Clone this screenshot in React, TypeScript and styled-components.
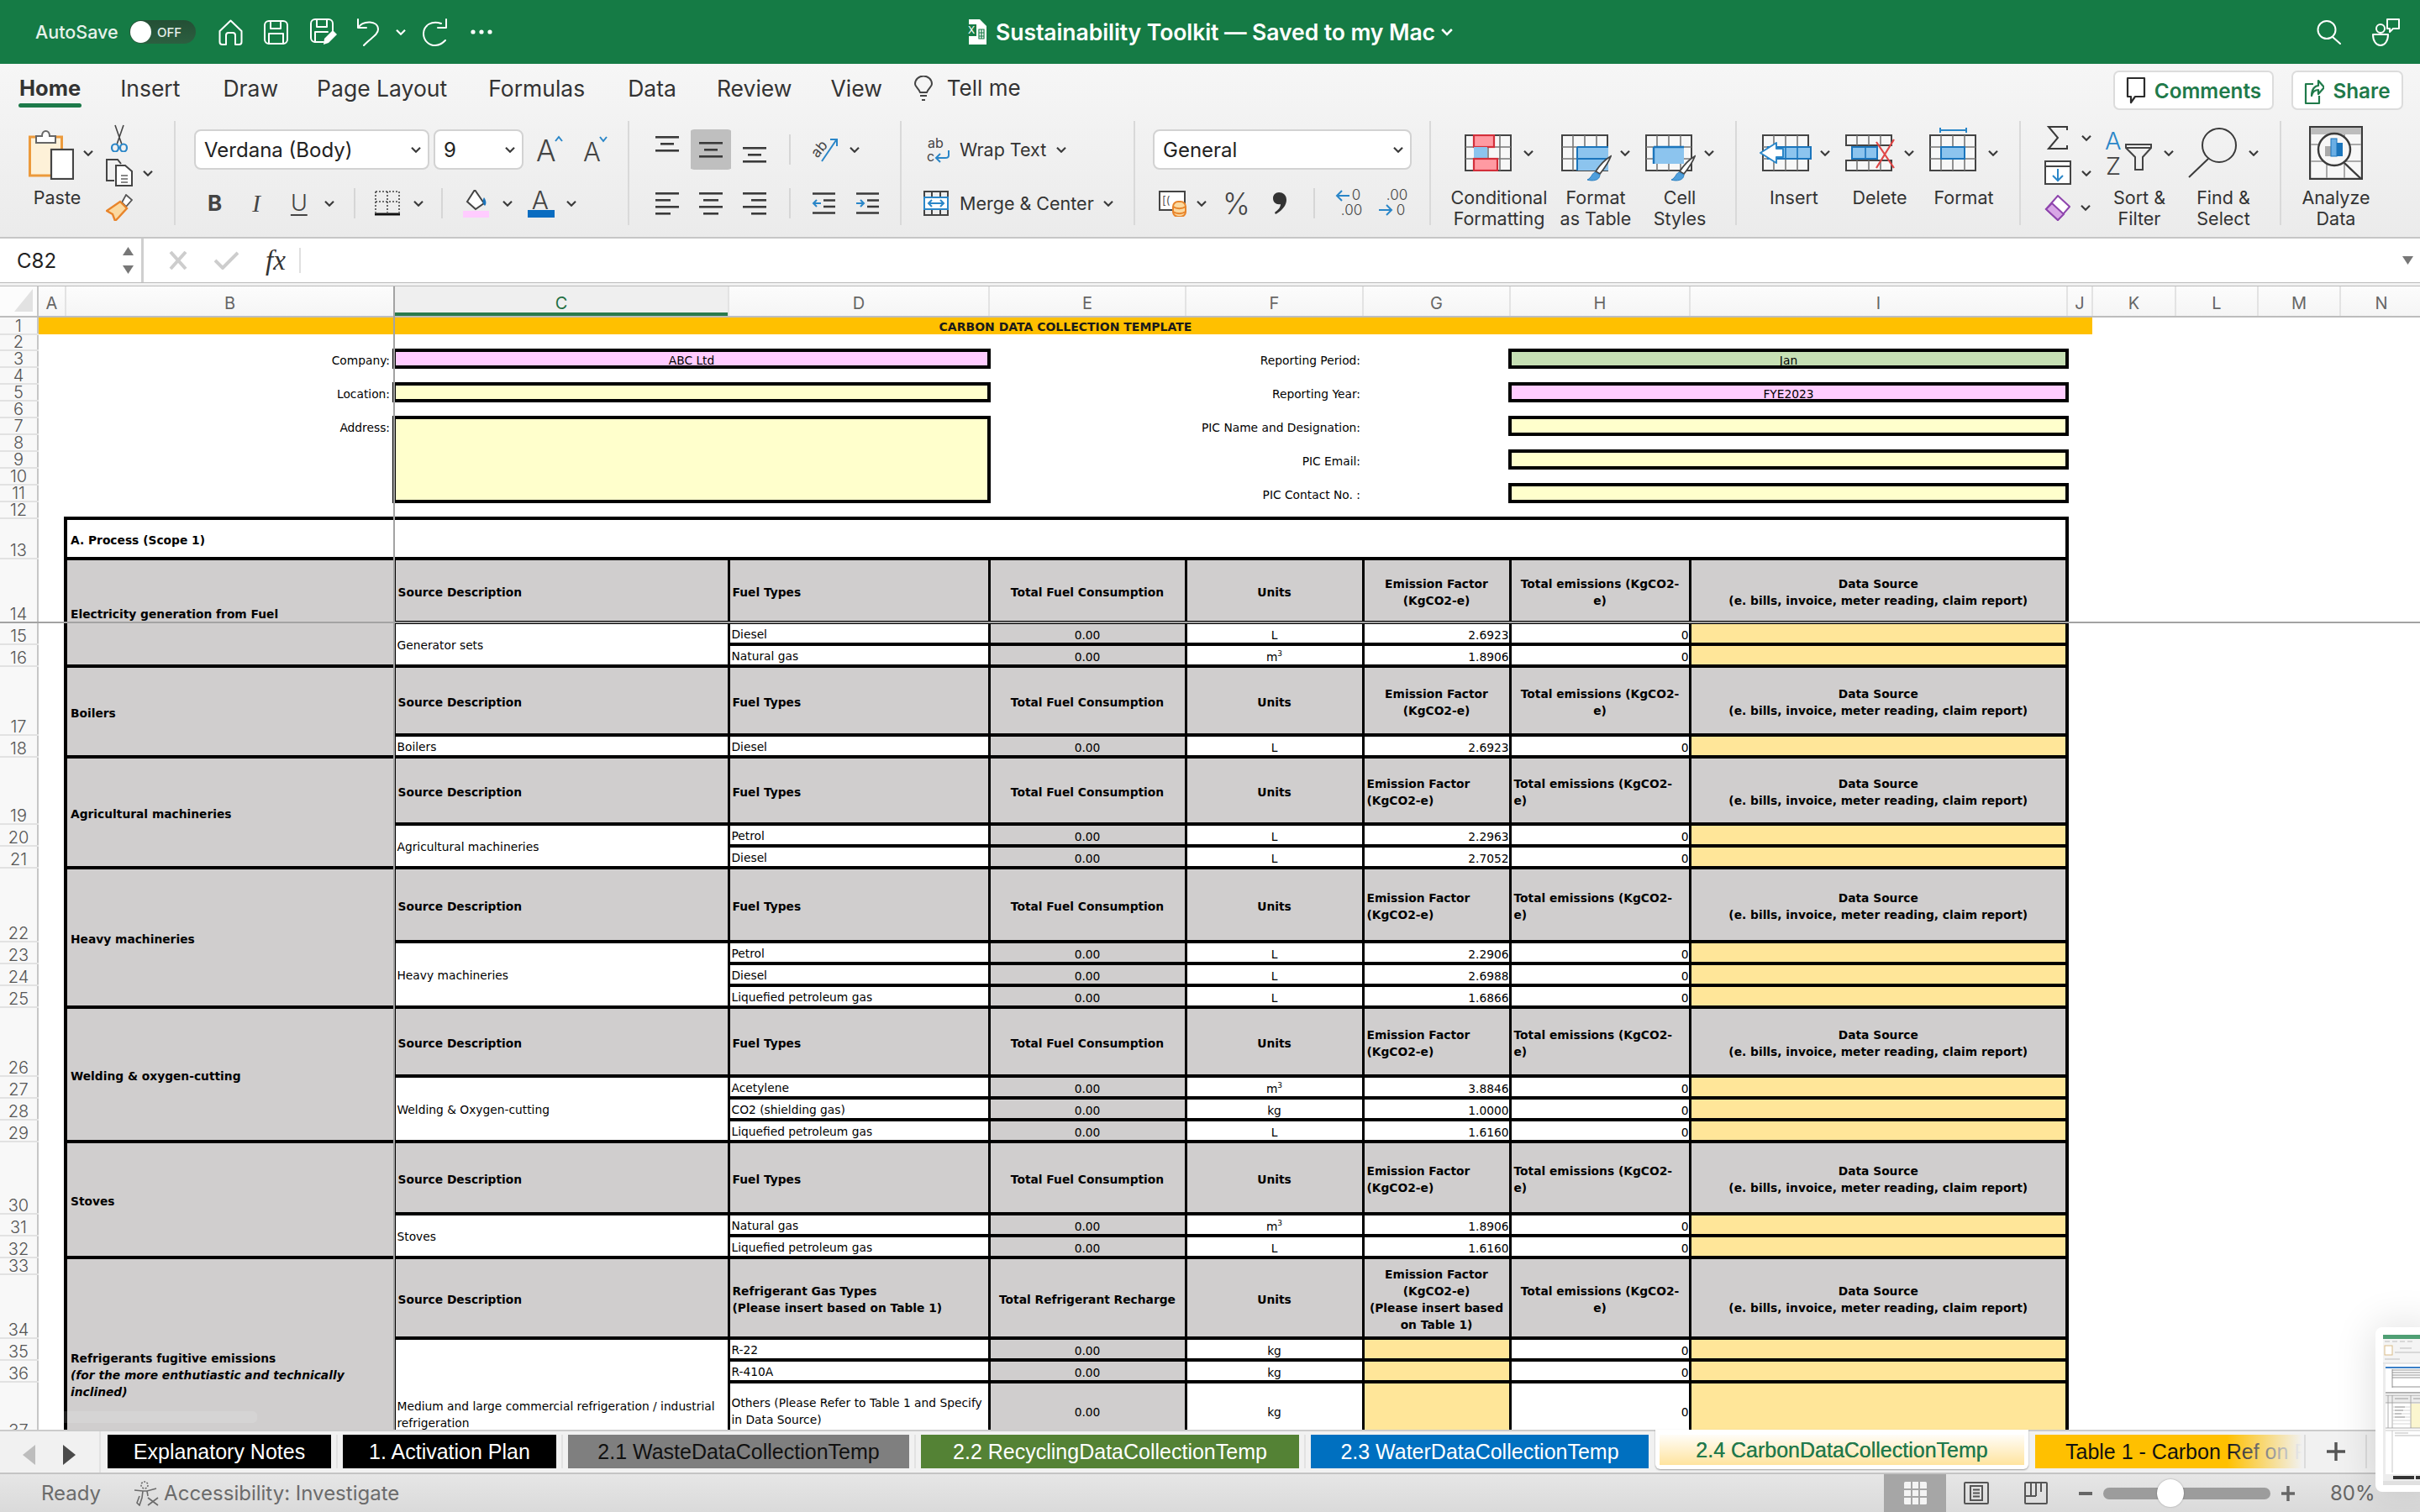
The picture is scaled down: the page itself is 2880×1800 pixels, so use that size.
import React from 'react';
import styled, { createGlobalStyle, css } from 'styled-components';

const Global = createGlobalStyle`
  html, body { margin: 0; padding: 0; background: #fff; }
  * { box-sizing: border-box; }
`;

const UI = `Inter, "Liberation Sans", sans-serif`;
const SHEET = `"DejaVu Sans", Verdana, sans-serif`;

const Window = styled.div`
  position: relative;
  width: 2880px;
  height: 1800px;
  overflow: hidden;
  display: flex;
  flex-direction: column;
  font-family: ${UI};
  color: #333;
`;

/* title bar */
const TitleBar = styled.div`
  height: 76px;
  flex: none;
  background: #157b45;
  display: flex;
  align-items: center;
  position: relative;
  padding-left: 42px;
  color: #fff;
`;
const AutoSave = styled.span`
  font-size: 21.5px;
  color: #e6f1ea;
  font-weight: 500;
  width: 112px;
`;
const Toggle = styled.div`
  width: 79px;
  height: 28px;
  border-radius: 14px;
  background: linear-gradient(#244f35, #2c5f40);
  display: flex;
  align-items: center;
  padding-left: 1px;
  gap: 7px;
  margin-right: 27px;
`;
const Knob = styled.span`
  width: 25px;
  height: 26px;
  border-radius: 50%;
  background: #fff;
`;
const ToggleText = styled.span`
  font-size: 15px;
  font-weight: 500;
  color: #e4efe8;
`;
const QuickIcon = styled.span<{ $ml?: number }>`
  display: inline-flex;
  margin-left: ${(p) => p.$ml ?? 0}px;
`;
const TitleCenter = styled.div`
  position: absolute;
  left: 1150px;
  top: 0;
  height: 76px;
  display: flex;
  align-items: center;
`;
const TitleText = styled.span`
  font-size: 26.6px;
  font-weight: 600;
  margin-left: 11px;
  margin-right: 7px;
  letter-spacing: -0.1px;
`;
const TitleRight = styled.div`
  margin-left: auto;
  padding-right: 24px;
  display: flex;
  align-items: center;
  gap: 37px;
`;

/* menu row */
const Shell = styled.div`
  flex: none;
  height: 208px;
  background: linear-gradient(#f6f6f6, #ebebeb);
  border-bottom: 2px solid #c6c6c6;
`;
const MenuRow = styled.div`
  height: 68px;
  display: flex;
  align-items: flex-start;
  padding-left: 23px;
  position: relative;
`;
const MenuTab = styled.div<{ $active?: boolean; $ml: number }>`
  position: relative;
  margin-left: ${(p) => p.$ml}px;
  margin-top: 12px;
  font-size: ${(p) => (p.$active ? 25.5 : 26.5)}px;
  line-height: 34px;
  color: #333;
  font-weight: ${(p) => (p.$active ? 700 : 400)};
  ${(p) =>
    p.$active &&
    css`
      &::after {
        content: '';
        position: absolute;
        left: -1px;
        right: -1px;
        bottom: -6px;
        height: 5px;
        border-radius: 3px;
        background: #1d7a4a;
      }
    `}
`;
const TellMe = styled.div`
  display: flex;
  align-items: center;
  gap: 17px;
  margin-left: 38px;
  margin-top: 12px;
  font-size: 26px;
  line-height: 34px;
`;
const MenuButtons = styled.div`
  position: absolute;
  right: 20px;
  top: 8px;
  display: flex;
  gap: 21px;
`;
const PillButton = styled.div<{ $w: number }>`
  width: ${(p) => p.$w}px;
  height: 47px;
  background: #fff;
  border: 2px solid #dcdcdc;
  border-radius: 7px;
  display: flex;
  align-items: center;
  justify-content: center;
  gap: 10px;
  color: #1f7a4a;
  font-size: 24.3px;
  font-weight: 600;
`;

/* ribbon */
const Ribbon = styled.div`
  display: flex;
  height: 124px;
`;
const Group = styled.div<{ $w: number; $pl?: number; $last?: boolean }>`
  flex: none;
  width: ${(p) => p.$w}px;
  padding-left: ${(p) => p.$pl ?? 0}px;
  border-right: ${(p) => (p.$last ? 'none' : '2px solid #d9d9d9')};
`;
const FlexGroup = styled(Group)`
  display: flex;
`;
const Rows = styled.div`
  display: flex;
  flex-direction: column;
  padding-top: 10px;
  gap: 20px;
`;
const ToolRow = styled.div<{ $h?: number }>`
  display: flex;
  align-items: center;
  height: ${(p) => p.$h ?? 40}px;
`;
const Tool = styled.span<{ $ml?: number; $mt?: number; $mb?: number }>`
  display: inline-flex;
  flex: none;
  align-items: center;
  justify-content: center;
  margin-left: ${(p) => p.$ml ?? 0}px;
  margin-top: ${(p) => p.$mt ?? 0}px;
  margin-bottom: ${(p) => p.$mb ?? 0}px;
`;
const ThinSep = styled.span<{ $ml: number }>`
  width: 2px;
  height: 36px;
  flex: none;
  background: #d6d6d6;
  margin-left: ${(p) => p.$ml}px;
`;
const Select = styled.div<{ $w: number; $ml?: number }>`
  width: ${(p) => p.$w}px;
  margin-left: ${(p) => p.$ml ?? 0}px;
  height: 48px;
  flex: none;
  background: #fff;
  border: 2px solid #d2d2d2;
  border-radius: 8px;
  display: flex;
  align-items: center;
  justify-content: space-between;
  padding: 0 8px 0 10px;
  font-size: 24px;
  color: #222;
`;
const FormatLetter = styled.span<{ $ml: number; $kind: 'b' | 'i' | 'u' }>`
  margin-left: ${(p) => p.$ml}px;
  font-size: 27px;
  line-height: 34px;
  color: #444;
  ${(p) => p.$kind === 'b' && 'font-weight: 700; font-size: 26px;'}
  ${(p) => p.$kind === 'i' && 'font-style: italic; font-family: "Liberation Serif", serif; font-size: 29px;'}
  ${(p) => p.$kind === 'u' && 'text-decoration: underline; text-underline-offset: 4px; font-weight: 300;'}
`;
const AlignCell = styled.span<{ $on?: boolean; $pos?: 'top' | 'bottom' }>`
  width: 52px;
  height: 48px;
  flex: none;
  display: flex;
  align-items: ${(p) => (p.$pos === 'top' ? 'flex-start' : p.$pos === 'bottom' ? 'flex-end' : 'center')};
  padding: ${(p) => (p.$pos ? '8px 0' : '0')};
  justify-content: center;
  ${(p) => p.$on && 'background: linear-gradient(90deg, transparent 2px, #bfbfbf 2px, #bfbfbf 50px, transparent 50px); border-radius: 6px;'}
`;
const WrapLabel = styled.span`
  margin-left: 10px;
  font-size: 21.5px;
  color: #333;
  white-space: nowrap;
`;
const BigSymbol = styled.span<{ $ml: number; $size: number }>`
  margin-left: ${(p) => p.$ml}px;
  font-size: ${(p) => p.$size}px;
  line-height: 40px;
  font-weight: 300;
  color: #444;
`;
const BigBtn = styled.div<{ $w: number }>`
  width: ${(p) => p.$w}px;
  flex: none;
  display: flex;
  flex-direction: column;
  align-items: center;
`;
const BigIconRow = styled.div<{ $gap?: number }>`
  height: 76px;
  flex: none;
  display: flex;
  align-items: center;
  gap: ${(p) => p.$gap ?? 14}px;
`;
const BigLabel = styled.div`
  flex: none;
  font-size: 21.5px;
  line-height: 25px;
  text-align: center;
  white-space: pre-line;
  color: #333;
  margin-top: 3px;
`;
const PasteLabel = styled(BigLabel)`
  padding-right: 8px;
`;
const ToolColumn = styled.div<{ $w: number }>`
  width: ${(p) => p.$w}px;
  flex: none;
  display: flex;
  flex-direction: column;
`;
const ColumnItem = styled.div`
  height: 43.5px;
  display: flex;
  align-items: center;
  gap: 12px;
`;

/* icons built from a letter and a small drawing */
const IconBox = styled.span<{ $w: number; $h: number }>`
  position: relative;
  display: inline-block;
  flex: none;
  width: ${(p) => p.$w}px;
  height: ${(p) => p.$h}px;
  & > svg {
    position: absolute;
    left: 0;
    top: 0;
  }
`;
const Glyph = styled.span<{ $x: number; $y: number; $size: number; $c?: string; $rot?: number; $fw?: number }>`
  position: absolute;
  left: ${(p) => p.$x}px;
  top: ${(p) => p.$y}px;
  font-size: ${(p) => p.$size}px;
  line-height: 1;
  font-weight: ${(p) => p.$fw ?? 300};
  color: ${(p) => p.$c ?? '#444'};
  white-space: nowrap;
  ${(p) => p.$rot && `transform: rotate(${p.$rot}deg);`}
`;

/* formula bar */
const FormulaBar = styled.div`
  height: 52px;
  flex: none;
  background: #fff;
  display: flex;
  align-items: center;
  position: relative;
`;
const NameBox = styled.div`
  width: 171px;
  height: 52px;
  border-right: 3px solid #cfcfcf;
  display: flex;
  align-items: center;
  justify-content: space-between;
  padding: 0 9px 0 20px;
  font-size: 24px;
  color: #222;
`;
const Spinner = styled.div`
  display: flex;
  flex-direction: column;
  gap: 12px;
`;
const FxText = styled.span`
  font-family: 'Liberation Serif', serif;
  font-style: italic;
  font-size: 33px;
  color: #333;
  margin-left: 32px;
  width: 40px;
`;
const FormulaSep = styled.span`
  width: 2px;
  height: 30px;
  background: #e0e0e0;
`;
const FormulaDrop = styled.span`
  position: absolute;
  right: 8px;
  top: 21px;
  display: flex;
`;
const FormulaGap = styled.div`
  height: 5px;
  flex: none;
  background: #f2f2f2;
  border-top: 1px solid #bcbcbc;
  border-bottom: 1px solid #bcbcbc;
`;

/* sheet */
const Viewport = styled.div`
  position: relative;
  flex: 1;
  min-height: 0;
  overflow: hidden;
  background: #fff;
`;
const SheetTable = styled.table`
  border-collapse: collapse;
  table-layout: fixed;
  width: 2883px;
  font-family: ${SHEET};
  font-size: 13.8px;
  line-height: 16px;
  color: #000;
`;
const Col = styled.col<{ $w: number }>`
  width: ${(p) => p.$w}px;
`;
const Row = styled.tr<{ $h: number }>`
  height: ${(p) => p.$h}px;
`;
const ColHead = styled.th<{ $selected?: boolean }>`
  padding: 4px 0 0;
  font-family: ${UI};
  font-weight: 400;
  font-size: 20px;
  line-height: 20px;
  color: ${(p) => (p.$selected ? '#1f6f43' : '#666')};
  background: ${(p) => (p.$selected ? '#efefef' : 'linear-gradient(#fcfcfc, #f5f5f5)')};
  border-right: 2px solid #e3e3e3;
  border-bottom: 2px solid #bdbdbd;
  ${(p) => p.$selected && 'box-shadow: inset 0 -4px 0 #2a7a4c;'}
`;
const Corner = styled.th`
  padding: 0 5px 0 0;
  background: #fcfcfc;
  border-right: 2px solid #c6c6c6;
  border-bottom: 2px solid #bdbdbd;
  text-align: right;
  vertical-align: middle;
`;
const RowHead = styled.td`
  padding: 0;
  font-family: ${UI};
  font-size: 20px;
  font-weight: 300;
  line-height: 16px;
  text-align: center;
  vertical-align: bottom;
  padding-bottom: 1px;
  color: #555;
  background: #f8f8f8;
  border-right: 2px solid #c6c6c6;
  border-bottom: 2px solid #e2e2e2;
`;
const Blank = styled.td`
  padding: 0;
`;
const Banner = styled.td`
  padding: 2px 0 0;
  background: #ffc000;
  text-align: center;
  font-weight: 700;
  font-size: 14px;
  color: #1a1a1a;
`;
const FieldLabel = styled.td`
  padding: 4px 3px 0 0;
  text-align: right;
  white-space: nowrap;
`;
const FieldBox = styled.td<{ $bg: string }>`
  padding: 4px 0 0;
  line-height: 12px;
  text-align: center;
  background: ${(p) => p.$bg};
  border: 4px solid #000;
`;
const SectionTitle = styled.td`
  padding: 4px 0 0 4px;
  font-weight: 700;
  background: #fff;
  border: 4px solid #000;
`;

type CellKind = 'title' | 'headLeft' | 'headCenter' | 'plain' | 'fill' | 'center' | 'number' | 'input';

const kindStyles: Record<CellKind, ReturnType<typeof css>> = {
  title: css`
    background: #d0cece;
    font-weight: 700;
    line-height: 20px;
    padding: 4px 0 0 4px;
    border-left-width: 4px;
  `,
  headLeft: css`
    background: #d0cece;
    font-weight: 700;
    line-height: 20px;
    padding: 4px 0 0 3px;
  `,
  headCenter: css`
    background: #d0cece;
    font-weight: 700;
    line-height: 20px;
    padding-top: 4px;
    text-align: center;
  `,
  plain: css`
    background: #fff;
    line-height: 20px;
    padding: 2px 0 0 2px;
  `,
  fill: css`
    background: #d0cece;
    padding-top: 4px;
    text-align: center;
  `,
  center: css`
    background: #fff;
    padding-top: 4px;
    text-align: center;
  `,
  number: css`
    background: #fff;
    padding-top: 4px;
    text-align: right;
  `,
  input: css`
    background: #ffe699;
    padding-top: 4px;
    text-align: right;
  `,
};

const Cell = styled.td<{ $kind: CellKind; $edge?: boolean }>`
  padding: 0;
  border-style: solid;
  border-color: #000;
  border-width: 4px 3px;
  ${(p) => kindStyles[p.$kind]}
  ${(p) => p.$edge && 'border-right-width: 4px;'}
`;
const Sup = styled.sup`
  font-size: 9px;
  line-height: 0;
`;
const FreezeV = styled.div`
  position: absolute;
  left: 468px;
  top: 0;
  bottom: 0;
  width: 2px;
  background: #a3a3a3;
`;
const FreezeH = styled.div`
  position: absolute;
  left: 0;
  right: 0;
  top: 399px;
  height: 2px;
  background: #a3a3a3;
`;
const GhostBar = styled.div`
  position: absolute;
  left: 51px;
  top: 1339px;
  width: 255px;
  height: 14px;
  border-radius: 5px;
  background: rgba(255, 255, 255, 0.12);
`;

/* sheet tabs */
const TabBar = styled.div`
  height: 53px;
  flex: none;
  position: relative;
  background: #f1f1f1;
  border-top: 2px solid #cbcbcb;
  border-bottom: 2px solid #c4c4c4;
  display: flex;
  align-items: flex-start;
`;
const TabNav = styled.div`
  width: 120px;
  height: 49px;
  display: flex;
  align-items: center;
  justify-content: center;
  gap: 33px;
  padding-top: 6px;
  padding-right: 2px;
  border-right: 2px solid #e2e2e2;
  flex: none;
`;
const Tab = styled.div<{ $w: number; $bg: string; $fg: string; $ml: number }>`
  width: ${(p) => p.$w}px;
  margin-left: ${(p) => p.$ml}px;
  margin-top: 4px;
  height: 40px;
  flex: none;
  background: ${(p) => p.$bg};
  color: ${(p) => p.$fg};
  font-family: 'Liberation Sans', sans-serif;
  font-size: 25px;
  display: flex;
  align-items: center;
  justify-content: center;
  white-space: nowrap;
  overflow: hidden;
`;
const TabDivider = styled.span`
  width: 2px;
  height: 40px;
  margin: 4px 0 0 6px;
  background: #e2e2e2;
  flex: none;
`;
const ActiveTab = styled.div`
  position: relative;
  width: 444px;
  height: 47px;
  margin-left: 8px;
  margin-top: -2px;
  flex: none;
  padding: 6px 5px 5px;
  background: #fff;
  border-radius: 0 0 6px 6px;
  box-shadow: 0 1px 2px rgba(0, 0, 0, 0.35);
  z-index: 1;
`;
const ActiveFace = styled.div`
  height: 36px;
  background: linear-gradient(#fffdf8, #ffe49f);
  color: #23794c;
  font-family: 'Liberation Sans', sans-serif;
  font-size: 25px;
  display: flex;
  align-items: center;
  justify-content: center;
  text-shadow: 0 0 0.4px #23794c;
`;
const FadeTab = styled(Tab)`
  position: relative;
  justify-content: flex-start;
  padding-left: 36px;
  &::after {
    content: '';
    position: absolute;
    right: 0;
    top: 0;
    bottom: 0;
    width: 90px;
    background: linear-gradient(90deg, rgba(241, 241, 241, 0), #f1f1f1);
  }
`;
const AddSheet = styled.div`
  width: 75px;
  height: 40px;
  margin-top: 4px;
  margin-left: 2px;
  flex: none;
  display: flex;
  align-items: center;
  justify-content: center;
  border-left: 2px solid #dcdcdc;
  border-right: 2px solid #dcdcdc;
`;

/* status bar */
const StatusBar = styled.div`
  height: 45px;
  flex: none;
  background: linear-gradient(#e6e6e6, #dadada);
  display: flex;
  align-items: center;
  padding-left: 49px;
  color: #6b6b6b;
  font-size: 24px;
`;
const Access = styled.div`
  display: flex;
  align-items: center;
  gap: 5px;
  margin-left: 39px;
`;
const ViewGroup = styled.div`
  margin-left: auto;
  display: flex;
  align-items: center;
  height: 45px;
  width: 638px;
`;
const ViewBtn = styled.div<{ $on?: boolean; $w: number }>`
  width: ${(p) => p.$w}px;
  height: 45px;
  flex: none;
  display: flex;
  align-items: center;
  justify-content: center;
  background: ${(p) => (p.$on ? '#a6a6a6' : 'transparent')};
`;
const Track = styled.div`
  position: relative;
  width: 199px;
  height: 14px;
  margin: 0 13px;
  flex: none;
  background: #9c9c9c;
  border-radius: 7px;
`;
const TrackKnob = styled.span`
  position: absolute;
  left: 64px;
  top: -10px;
  width: 32px;
  height: 33px;
  border-radius: 50%;
  background: #fff;
  box-shadow: 0 0 2px rgba(0, 0, 0, 0.35);
`;
const ZoomText = styled.span`
  margin-left: 42px;
  font-size: 24px;
  color: #666;
`;

/* screenshot preview floating in the corner */
const Preview = styled.div`
  position: absolute;
  left: 2827px;
  top: 1580px;
  width: 70px;
  height: 196px;
  background: #fff;
  border-radius: 8px;
  box-shadow: 0 0 50px rgba(0, 0, 0, 0.14);
  padding: 8px 0 0 9px;
  z-index: 3;
`;

/* ---------- icons ---------- */

const Chev = ({ c = '#3a3a3a', w = 12 }: { c?: string; w?: number }) => (
  <svg width={w} height={w * 0.7} viewBox="0 0 12 8" fill="none">
    <path d="M1 1.5 L6 6.5 L11 1.5" stroke={c} strokeWidth="2.2" />
  </svg>
);

const Stroke = { fill: 'none', stroke: '#fff', strokeWidth: 2, strokeLinejoin: 'round' as const, strokeLinecap: 'round' as const };

const HomeIcon = () => (
  <svg width="29" height="31" viewBox="0 0 29 31">
    <path d="M1.5 14 L14.5 1.5 L27.5 14 V27 a3 3 0 0 1-3 3 H20 V19 a3 3 0 0 0-3-3 H12 a3 3 0 0 0-3 3 V30 H4.5 a3 3 0 0 1-3-3 Z" {...Stroke} />
  </svg>
);
const SaveIcon = () => (
  <svg width="29" height="29" viewBox="0 0 29 29">
    <rect x="1" y="1" width="27" height="27" rx="5" {...Stroke} />
    <path d="M8 1 V10 H20 V1 M6 28 V16 H23 V28" {...Stroke} />
  </svg>
);
const SaveEditIcon = () => (
  <svg width="32" height="32" viewBox="0 0 32 32">
    <path d="M16 28 H6 a5 5 0 0 1-5-5 V6 a5 5 0 0 1 5-5 H22 a5 5 0 0 1 5 5 V14" {...Stroke} />
    <path d="M8 1 V10 H20 V1 M6 28 V16 H21" {...Stroke} />
    <path d="M16 31 L17 24 L27 14 L32 19 L22 29 Z" fill="#fff" />
  </svg>
);
const UndoIcon = () => (
  <svg width="28" height="33" viewBox="0 0 28 33">
    <path d="M2 1 V11 H12 M2 11 C8 2 26 2 26 13 C26 20 16 24 9 32" {...Stroke} />
  </svg>
);
const RedoIcon = () => (
  <svg width="33" height="33" viewBox="0 0 33 33">
    <path d="M23 6 C12 2 2 8 2 18 C2 27 9 32 16 32 C22 32 25 29 28 26" {...Stroke} />
    <path d="M29 1 V11 H19" {...Stroke} />
  </svg>
);
const DotsIcon = () => (
  <svg width="26" height="6" viewBox="0 0 26 6">
    <circle cx="3" cy="3" r="2.6" fill="#fff" />
    <circle cx="13" cy="3" r="2.6" fill="#fff" />
    <circle cx="23" cy="3" r="2.6" fill="#fff" />
  </svg>
);
const XlsxIcon = () => (
  <IconBox $w={24} $h={30}>
    <svg width="24" height="30" viewBox="0 0 24 30">
      <path d="M3 0 H16 L24 8 V30 H3 Z" fill="#fff" />
      <path d="M0 6 H12 V20 H0 Z" fill="#157b45" />
      <path d="M15 12 h6 v11 h-6 z M18 12 v11 M15 16 h6 M15 20 h6" stroke="#157b45" strokeWidth="1.2" fill="none" />
    </svg>
    <Glyph $x={2} $y={7} $size={12} $c="#fff" $fw={400}>X</Glyph>
  </IconBox>
);
const SearchIcon = () => (
  <svg width="29" height="29" viewBox="0 0 29 29">
    <ellipse cx="12" cy="11.5" rx="10.5" ry="10.5" {...Stroke} />
    <path d="M19 20 L28 28" {...Stroke} />
  </svg>
);
const PeopleIcon = () => (
  <svg width="33" height="33" viewBox="0 0 33 33">
    <circle cx="10" cy="12" r="5" {...Stroke} />
    <path d="M1 19 H19 C19 27 15 32 10 32 C5 32 1 27 1 19 Z" {...Stroke} />
    <path d="M18 1 H32 V12 H25 L21 16 V12 H18 Z" {...Stroke} />
  </svg>
);
const BulbIcon = () => (
  <svg width="22" height="31" viewBox="0 0 22 31" fill="none" stroke="#444" strokeWidth="2">
    <path d="M7 20 C5 15 1 13 1 10 a10 9.5 0 0 1 20 0 C21 13 17 15 15 20 Z" />
    <path d="M7 24 H15 M9 29 H13" />
  </svg>
);
const CommentIcon = () => (
  <svg width="24" height="34" viewBox="0 0 24 34" fill="none" stroke="#444" strokeWidth="2.2">
    <path d="M2 2 H22 V24 H11 L6 31 V24 H2 Z" strokeLinejoin="round" stroke="#2b2b2b" />
  </svg>
);
const ShareIcon = () => (
  <svg width="24" height="36" viewBox="0 0 24 36" fill="none" stroke="#1f7a4a" strokeWidth="2.2">
    <path d="M11 10 H2 V33 H18 V24" strokeLinejoin="round" />
    <path d="M9 24 C9 16 13 12 17 12 V6 L24 14 L17 22 V17 C13 17 10 20 9 24 Z" strokeLinejoin="round" />
  </svg>
);
const PasteIcon = () => (
  <svg width="54" height="60" viewBox="0 0 54 60">
    <rect x="1.5" y="9" width="38" height="46" fill="#fdf1d8" stroke="#ec9a3c" strokeWidth="3" />
    <path d="M9 16 V8 H16 C16 0 25 0 25 8 H32 V16 Z" fill="#fff" stroke="#666" strokeWidth="2" />
    <rect x="27" y="24" width="26" height="35" fill="#fff" stroke="#444" strokeWidth="2.2" />
  </svg>
);
const ScissorsIcon = () => (
  <svg width="22" height="33" viewBox="0 0 22 33" fill="none">
    <path d="M6 1 L14 24 M16 1 L8 24" stroke="#444" strokeWidth="1.6" />
    <ellipse cx="6" cy="28" rx="4" ry="4.5" stroke="#2a86c8" strokeWidth="2.2" />
    <ellipse cx="16" cy="28" rx="4" ry="4.5" stroke="#2a86c8" strokeWidth="2.2" />
  </svg>
);
const CopyIcon = () => (
  <svg width="32" height="33" viewBox="0 0 32 33" fill="none" stroke="#444" strokeWidth="2">
    <path d="M10 26 H1 V1 H14 L18 6" />
    <path d="M12 8 H23 L31 15 V32 H12 Z" fill="#fff" />
    <path d="M18 20 H26 M18 24 H26 M18 28 H26" stroke="#888" />
  </svg>
);
const BrushIcon = () => (
  <svg width="32" height="32" viewBox="0 0 32 32">
    <path d="M24 1 L31 7 L24 15 L19 10 Z" fill="#fff" stroke="#555" strokeWidth="1.8" />
    <path d="M17 9 L25 17 L15 28 L11 32 L8 24 L1 20 Z" fill="#fbd9a0" stroke="#e8842a" strokeWidth="2.4" />
  </svg>
);
const AIcon = ({ up }: { up: boolean }) => (
  <IconBox $w={32} $h={34}>
    <Glyph $x={0} $y={up ? 1 : 4} $size={up ? 35 : 31}>A</Glyph>
    <svg width="32" height="34" viewBox="0 0 32 34">
      <path d={up ? 'M23 7 L27 2 L31 7' : 'M20 2 L24 7 L28 2'} fill="none" stroke="#2a86c8" strokeWidth="2" />
    </svg>
  </IconBox>
);
const BorderIcon = () => (
  <svg width="30" height="30" viewBox="0 0 30 30" fill="none">
    <path d="M1 1 H29 V26 M1 1 V26 M15 1 V26 M1 13 H29" stroke="#444" strokeWidth="1.6" strokeDasharray="2 2" />
    <path d="M0 28 H30" stroke="#111" strokeWidth="3" />
  </svg>
);
const FillIcon = () => (
  <svg width="31" height="33" viewBox="0 0 31 33">
    <path d="M14 0 L25 16 L15 23 L5 14 Z" fill="#fff" stroke="#444" strokeWidth="2" />
    <path d="M25 9 C28 13 28 17 26 19 C23 17 23 12 25 9 Z" fill="#1b75bc" />
    <rect x="0" y="25" width="31" height="8" fill="#ffccff" />
  </svg>
);
const FontColorIcon = () => (
  <IconBox $w={32} $h={33}>
    <Glyph $x={5} $y={-3} $size={30}>A</Glyph>
    <svg width="32" height="33" viewBox="0 0 32 33">
      <rect x="0" y="24" width="32" height="9" fill="#0a6cc0" />
    </svg>
  </IconBox>
);
const Lines = ({ rows, w = 28, h = 19 }: { rows: [number, number][]; w?: number; h?: number }) => (
  <svg width={w} height={h} viewBox={`0 0 ${w} ${h}`}>
    {rows.map(([x, len], i) => (
      <rect key={i} x={x} y={(i * (h - 3)) / (rows.length - 1)} width={len} height="2.6" fill="#3a3a3a" />
    ))}
  </svg>
);
const OrientIcon = () => (
  <IconBox $w={33} $h={30}>
    <Glyph $x={1} $y={6} $size={17} $rot={-50} $fw={400}>ab</Glyph>
    <svg width="33" height="30" viewBox="0 0 33 30">
      <path d="M14 29 L31 4 M24 3 H32 V11" fill="none" stroke="#2a86c8" strokeWidth="2" />
    </svg>
  </IconBox>
);
const IndentIcon = ({ out }: { out: boolean }) => (
  <svg width="29" height="26" viewBox="0 0 29 26" fill="none">
    <path d="M1 1.5 H28 M14 9.5 H28 M14 17 H28 M1 24.5 H28" stroke="#3a3a3a" strokeWidth="2.4" />
    <path d={out ? 'M11 13 H2 M6 9 L2 13 L6 17' : 'M1 13 H10 M6 9 L10 13 L6 17'} stroke="#2a86c8" strokeWidth="2" />
  </svg>
);
const WrapIcon = () => (
  <IconBox $w={30} $h={31}>
    <Glyph $x={2} $y={-1} $size={16} $fw={400}>ab</Glyph>
    <Glyph $x={1} $y={15} $size={16} $fw={400}>c</Glyph>
    <svg width="30" height="31" viewBox="0 0 30 31">
      <path d="M27 16 V22 Q27 25 23 25 H13 M17 20 L12 25 L17 30" fill="none" stroke="#2a86c8" strokeWidth="2" />
    </svg>
  </IconBox>
);
const MergeIcon = () => (
  <svg width="30" height="30" viewBox="0 0 30 30" fill="none">
    <rect x="1" y="1" width="28" height="28" stroke="#444" strokeWidth="2" />
    <path d="M10 1 V8 M20 1 V8 M10 22 V29 M20 22 V29" stroke="#444" strokeWidth="2" />
    <rect x="1" y="8" width="28" height="14" fill="#fff" stroke="#2a86c8" strokeWidth="2" />
    <path d="M6 15 H24 M10 11 L6 15 L10 19 M20 11 L24 15 L20 19" stroke="#2a86c8" strokeWidth="2" />
  </svg>
);
const AccountIcon = () => (
  <IconBox $w={33} $h={31}>
    <svg width="33" height="31" viewBox="0 0 33 31">
      <rect x="1" y="1" width="30" height="22" fill="#fff" stroke="#444" strokeWidth="2" />
      <rect x="17" y="13" width="15" height="18" rx="6" fill="#fbd9a0" stroke="#e8842a" strokeWidth="2" />
      <path d="M17 19 C21 22 28 22 32 19 M17 25 C21 28 28 28 32 25" stroke="#e8842a" strokeWidth="2" fill="none" />
    </svg>
    <Glyph $x={4} $y={5} $size={13} $c="#555" $fw={400}>{'[('}</Glyph>
  </IconBox>
);
const CommaIcon = () => (
  <svg width="18" height="26" viewBox="0 0 18 26">
    <path d="M8 0 C13 0 17 3 17 9 C17 16 11 22 4 26 L3 24 C7 21 10 18 10 14 C5 15 1 12 1 7 C1 3 4 0 8 0 Z" fill="#333" />
  </svg>
);
const DecimalIcon = ({ more }: { more: boolean }) => (
  <IconBox $w={32} $h={32}>
    <Glyph $x={more ? 20 : 9} $y={-2} $size={17}>{more ? '0' : '.00'}</Glyph>
    <Glyph $x={more ? 7 : 21} $y={16} $size={17}>{more ? '.00' : '0'}</Glyph>
    <svg width="32" height="32" viewBox="0 0 32 32">
      <path d={more ? 'M17 7 H2 M8 1 L2 7 L8 13' : 'M0 24 H15 M9 18 L15 24 L9 30'} fill="none" stroke="#2a86c8" strokeWidth="2" />
    </svg>
  </IconBox>
);

const TableGrid = ({ x = 0, w = 56 }: { x?: number; w?: number }) => (
  <>
    <rect x={x + 1} y="1" width={w - 2} height="42" fill="#f7f7f7" stroke="#444" strokeWidth="2" />
    <path d={`M${x + w * 0.25} 1 V43 M${x + w * 0.5} 1 V43 M${x + w * 0.75} 1 V43 M${x + 1} 15 H${x + w - 1} M${x + 1} 29 H${x + w - 1}`} stroke="#777" strokeWidth="1.6" />
  </>
);
const Paintbrush = () => (
  <>
    <path d="M59 26 C56 34 50 42 46 47 L41 44 C45 38 52 30 59 26 Z" fill="#fff" stroke="#444" strokeWidth="1.8" />
    <path d="M40 45 C36 47 36 52 31 54 C37 56 46 55 46 48 Z" fill="#4f9fdc" stroke="#2a7fc0" strokeWidth="1" />
  </>
);
const CondFormatIcon = () => (
  <svg width="56" height="44" viewBox="0 0 56 44">
    <TableGrid />
    <rect x="11" y="1" width="24" height="14" fill="#ff9aa2" stroke="#d32f3a" strokeWidth="2.2" />
    <rect x="11" y="15" width="16" height="14" fill="#8cc4ee" />
    <rect x="11" y="29" width="28" height="14" fill="#ff9aa2" stroke="#d32f3a" strokeWidth="2.2" />
  </svg>
);
const FormatTableIcon = () => (
  <svg width="60" height="56" viewBox="0 0 60 56">
    <TableGrid />
    <rect x="19" y="15" width="37" height="28" fill="#8cc4ee" />
    <path d="M19 15 H56 M19 29 H56 M19 15 V43" stroke="#1b75bc" strokeWidth="2" fill="none" />
    <Paintbrush />
  </svg>
);
const CellStylesIcon = () => (
  <svg width="60" height="56" viewBox="0 0 60 56">
    <TableGrid />
    <rect x="10" y="15" width="36" height="20" fill="#8cc4ee" />
    <path d="M10 15 H46 M10 15 V35" stroke="#1b75bc" strokeWidth="2.4" fill="none" />
    <Paintbrush />
  </svg>
);
const InsertIcon = () => (
  <svg width="64" height="44" viewBox="0 0 64 44">
    <TableGrid x={5} />
    <rect x="12" y="15" width="51" height="14" fill="#8cc4ee" stroke="#1b75bc" strokeWidth="2" />
    <path d="M33 15 V29 M47 15 V29" stroke="#1b75bc" strokeWidth="1.6" />
    <path d="M22 10 L3 22 L22 34 V27 H30 V17 H22 Z" fill="#fff" stroke="#2a86c8" strokeWidth="2" strokeLinejoin="round" />
  </svg>
);
const DeleteIcon = () => (
  <svg width="60" height="44" viewBox="0 0 60 44">
    <rect x="1" y="1" width="54" height="12" fill="#f7f7f7" stroke="#444" strokeWidth="2" />
    <rect x="1" y="31" width="54" height="12" fill="#f7f7f7" stroke="#444" strokeWidth="2" />
    <path d="M14 1 V13 M28 1 V13 M42 1 V13 M14 31 V43 M28 31 V43 M42 31 V43" stroke="#777" strokeWidth="1.6" />
    <rect x="8" y="15" width="30" height="14" fill="#8cc4ee" stroke="#1b75bc" strokeWidth="2" />
    <path d="M24 15 V29" stroke="#1b75bc" strokeWidth="1.6" />
    <path d="M37 9 L58 40 M58 6 L37 40" stroke="#e04646" strokeWidth="2.2" />
  </svg>
);
const FormatCellsIcon = () => (
  <svg width="56" height="54" viewBox="0 0 56 54">
    <path d="M13 2 V8 M44 2 V8 M13 5 H44" stroke="#2a86c8" strokeWidth="2" />
    <g transform="translate(0 10)">
      <TableGrid />
      <rect x="14" y="15" width="28" height="14" fill="#8cc4ee" stroke="#1b75bc" strokeWidth="2" />
    </g>
  </svg>
);
const SigmaIcon = () => (
  <svg width="25" height="29" viewBox="0 0 25 29" fill="none">
    <path d="M24 5 V1 H2 L13 14 L2 27 H24 V23" stroke="#3a3a3a" strokeWidth="2" />
  </svg>
);
const FillDownIcon = () => (
  <svg width="32" height="29" viewBox="0 0 32 29" fill="none">
    <rect x="1" y="1" width="30" height="27" fill="#fff" stroke="#444" strokeWidth="2" />
    <path d="M1 7 H31" stroke="#444" strokeWidth="2" />
    <path d="M16 10 V24 M10 18 L16 24 L22 18" stroke="#2a86c8" strokeWidth="2" />
  </svg>
);
const EraserIcon = () => (
  <svg width="31" height="31" viewBox="0 0 31 31">
    <path d="M16 1 L30 14 L16 30 L2 17 Z" fill="#fff" stroke="#8e44ad" strokeWidth="2" />
    <path d="M9 10 L23 23 L16 30 L2 17 Z" fill="#d8a6e6" stroke="#8e44ad" strokeWidth="2" />
  </svg>
);
const SortIcon = () => (
  <IconBox $w={56} $h={54}>
    <Glyph $x={0} $y={-2} $size={29} $c="#2a86c8">A</Glyph>
    <Glyph $x={1} $y={28} $size={29}>Z</Glyph>
    <svg width="56" height="54" viewBox="0 0 56 54">
      <path d="M25 17 H55 V21 L45 32 V47 H36 V32 L25 21 Z M25 21 H55" fill="none" stroke="#444" strokeWidth="2" />
    </svg>
  </IconBox>
);
const FindIcon = () => (
  <svg width="58" height="60" viewBox="0 0 58 60" fill="none" stroke="#3a3a3a" strokeWidth="2">
    <ellipse cx="37" cy="21" rx="20" ry="20" />
    <path d="M24 37 L1 59" />
  </svg>
);
const AnalyzeIcon = () => (
  <svg width="64" height="64" viewBox="0 0 64 64" fill="none">
    <rect x="1" y="1" width="62" height="62" fill="#f7f7f7" stroke="#3a3a3a" strokeWidth="2.4" />
    <rect x="2" y="2" width="60" height="8" fill="#bdbdbd" />
    <path d="M2 22 H62 M2 42 H62 M21 10 V62 M42 10 V62" stroke="#aaa" strokeWidth="2" />
    <circle cx="30" cy="28" r="19" fill="#f7f7f7" stroke="#3a3a3a" strokeWidth="2.4" />
    <rect x="19" y="24" width="7" height="12" fill="#aaa" />
    <rect x="26" y="15" width="7" height="21" fill="#6aaee4" stroke="#1b75bc" />
    <rect x="33" y="20" width="7" height="16" fill="#1b75bc" />
    <path d="M42 44 L62 63" stroke="#3a3a3a" strokeWidth="2.4" />
  </svg>
);
const Tri = ({ dir, c, w = 13, h = 10 }: { dir: 'up' | 'down' | 'left' | 'right'; c: string; w?: number; h?: number }) => {
  const pts = {
    up: `${w / 2},0 ${w},${h} 0,${h}`,
    down: `0,0 ${w},0 ${w / 2},${h}`,
    left: `${w},0 ${w},${h} 0,${h / 2}`,
    right: `0,0 ${w},${h / 2} 0,${h}`,
  }[dir];
  return (
    <svg width={w} height={h}>
      <polygon points={pts} fill={c} />
    </svg>
  );
};
const CrossCheck = () => (
  <>
    <Tool $ml={30}>
      <svg width="22" height="22" viewBox="0 0 22 22">
        <path d="M2 1 L20 21 M20 1 L2 21" stroke="#cdcdcd" strokeWidth="4" />
      </svg>
    </Tool>
    <Tool $ml={32}>
      <svg width="29" height="22" viewBox="0 0 29 22" fill="none">
        <path d="M1 11 L10 20 L28 2" stroke="#cdcdcd" strokeWidth="4" />
      </svg>
    </Tool>
  </>
);
const AccessIcon = () => (
  <svg width="31" height="30" viewBox="0 0 31 30" fill="none" stroke="#6b6b6b" strokeWidth="1.6">
    <circle cx="13" cy="5" r="4" strokeDasharray="2 1.5" />
    <path d="M1 11 L11 12 L16 12 L27 9 M11 12 L10 20 L7 29 L4 26 L7 18 M16 12 L17 18" />
    <path d="M17 20 L29 29 M29 20 L17 29" />
  </svg>
);
const NormalViewIcon = () => (
  <svg width="27" height="27" viewBox="0 0 27 27">
    <rect width="27" height="27" rx="1.5" fill="#f4f4f4" />
    <path d="M9 0 V27 M18 0 V27 M0 9 H27 M0 18 H27" stroke="#a6a6a6" strokeWidth="2" />
  </svg>
);
const PageViewIcon = () => (
  <svg width="30" height="27" viewBox="0 0 30 27" fill="none" stroke="#555" strokeWidth="2">
    <rect x="1" y="1" width="28" height="25" rx="1" />
    <rect x="8" y="5" width="14" height="17" />
    <path d="M11 9.5 H19 M11 13.5 H19 M11 17.5 H19" />
  </svg>
);
const BreakViewIcon = () => (
  <svg width="28" height="27" viewBox="0 0 28 27" fill="none" stroke="#555" strokeWidth="2">
    <rect x="1" y="1" width="26" height="25" rx="1" />
    <path d="M1 17 H14 M14 1 V17 M8 1 V17 M20 1 V12" />
  </svg>
);
const PreviewArt = () => (
  <svg width="44" height="180" viewBox="0 0 44 180">
    <rect y="1" width="44" height="5" fill="#4f9f74" />
    <rect y="6" width="44" height="29" fill="#f4f4f4" />
    <rect x="2" y="14" width="9" height="11" fill="#fff" stroke="#d9bb88" />
    <path d="M2 9 H8 M11 9 H17 M20 9 H26 M29 9 H35 M20 17 H34 M14 22 H44 M2 30 H20" stroke="#bdbdbd" />
    <path d="M0 35 H44" stroke="#d0d0d0" />
    <rect y="36" width="3" height="134" fill="#ececec" />
    <rect x="3" y="39" width="41" height="2" fill="#3a7fc8" />
    <path d="M11 42 V64 M11 43 H44 M11 46 H44 M11 49 H44 M11 52 H44 M11 63 H44" stroke="#777" strokeWidth="0.8" />
    <path d="M3 70 H44" stroke="#666" />
    <rect x="3" y="73" width="41" height="9" fill="#ececec" />
    <rect x="33" y="83" width="11" height="29" fill="#fbf6cf" />
    <path d="M3 73 H44 M3 82 H44 M3 112 H44 M6 73 V112 M11 73 V112 M33 73 V112" stroke="#999" strokeWidth="0.8" />
    <path d="M11 87 H33 M11 91 H33 M11 95 H33 M11 99 H33 M11 103 H33 M11 107 H33" stroke="#ccc" strokeWidth="0.8" />
    <path d="M14 77 H30 M36 77 H44 M14 87 H26 M14 91 H24 M14 95 H22 M14 99 H26" stroke="#888" strokeWidth="0.8" />
    <path d="M3 115 H44 M11 115 V165" stroke="#bbb" strokeWidth="0.8" />
    <path d="M14 118 H30 M14 121 H44" stroke="#aaa" strokeWidth="0.8" />
    <rect x="0" y="167" width="44" height="8" fill="#ededed" />
    <rect x="12" y="169" width="25" height="4" fill="#333" />
    <rect x="39" y="169" width="5" height="4" fill="#333" />
    <rect x="0" y="175" width="44" height="5" fill="#e0e0e0" />
  </svg>
);

/* ---------- sheet data ---------- */

const colWidths = [45, 33, 391, 398, 310, 234, 211, 175, 214, 449, 30, 99, 98, 98, 98];
const colNames = ['A', 'B', 'C', 'D', 'E', 'F', 'G', 'H', 'I', 'J', 'K', 'L', 'M', 'N'];

type DataRow = { n: number; h: number; fuel: string; unit: React.ReactNode; ef?: string };
type Section = {
  title: React.ReactNode;
  head: [number, number][];
  fuelHead: React.ReactNode;
  totalHead: string;
  efHead: React.ReactNode;
  leftHead?: boolean;
  source: React.ReactNode;
  rows: DataRow[];
};

const M3 = (
  <>
    m<Sup>3</Sup>
  </>
);
const EF = (
  <>
    Emission Factor
    <br />
    (KgCO2-e)
  </>
);
const LPG = 'Liquefied petroleum gas';

const sections: Section[] = [
  {
    title: 'Electricity generation from Fuel',
    head: [[14, 76]],
    fuelHead: 'Fuel Types',
    totalHead: 'Total Fuel Consumption',
    efHead: EF,
    source: 'Generator sets',
    rows: [
      { n: 15, h: 26, fuel: 'Diesel', unit: 'L', ef: '2.6923' },
      { n: 16, h: 26, fuel: 'Natural gas', unit: M3, ef: '1.8906' },
    ],
  },
  {
    title: 'Boilers',
    head: [[17, 82]],
    fuelHead: 'Fuel Types',
    totalHead: 'Total Fuel Consumption',
    efHead: EF,
    source: 'Boilers',
    rows: [{ n: 18, h: 26, fuel: 'Diesel', unit: 'L', ef: '2.6923' }],
  },
  {
    title: 'Agricultural machineries',
    head: [[19, 80]],
    fuelHead: 'Fuel Types',
    totalHead: 'Total Fuel Consumption',
    efHead: EF,
    leftHead: true,
    source: 'Agricultural machineries',
    rows: [
      { n: 20, h: 26, fuel: 'Petrol', unit: 'L', ef: '2.2963' },
      { n: 21, h: 26, fuel: 'Diesel', unit: 'L', ef: '2.7052' },
    ],
  },
  {
    title: 'Heavy machineries',
    head: [[22, 88]],
    fuelHead: 'Fuel Types',
    totalHead: 'Total Fuel Consumption',
    efHead: EF,
    leftHead: true,
    source: 'Heavy machineries',
    rows: [
      { n: 23, h: 26, fuel: 'Petrol', unit: 'L', ef: '2.2906' },
      { n: 24, h: 26, fuel: 'Diesel', unit: 'L', ef: '2.6988' },
      { n: 25, h: 26, fuel: LPG, unit: 'L', ef: '1.6866' },
    ],
  },
  {
    title: 'Welding & oxygen-cutting',
    head: [[26, 82]],
    fuelHead: 'Fuel Types',
    totalHead: 'Total Fuel Consumption',
    efHead: EF,
    leftHead: true,
    source: 'Welding & Oxygen-cutting',
    rows: [
      { n: 27, h: 26, fuel: 'Acetylene', unit: M3, ef: '3.8846' },
      { n: 28, h: 26, fuel: 'CO2 (shielding gas)', unit: 'kg', ef: '1.0000' },
      { n: 29, h: 26, fuel: LPG, unit: 'L', ef: '1.6160' },
    ],
  },
  {
    title: 'Stoves',
    head: [[30, 86]],
    fuelHead: 'Fuel Types',
    totalHead: 'Total Fuel Consumption',
    efHead: EF,
    leftHead: true,
    source: 'Stoves',
    rows: [
      { n: 31, h: 26, fuel: 'Natural gas', unit: M3, ef: '1.8906' },
      { n: 32, h: 26, fuel: LPG, unit: 'L', ef: '1.6160' },
    ],
  },
  {
    title: (
      <>
        Refrigerants fugitive emissions
        <br />
        <em>(for the more enthutiastic and technically inclined)</em>
      </>
    ),
    head: [
      [33, 20],
      [34, 76],
    ],
    fuelHead: (
      <>
        Refrigerant Gas Types
        <br />
        (Please insert based on Table 1)
      </>
    ),
    totalHead: 'Total Refrigerant Recharge',
    efHead: (
      <>
        Emission Factor
        <br />
        (KgCO2-e)
        <br />
        (Please insert based on Table 1)
      </>
    ),
    source: 'Medium and large commercial refrigeration / industrial refrigeration',
    rows: [
      { n: 35, h: 26, fuel: 'R-22', unit: 'kg' },
      { n: 36, h: 26, fuel: 'R-410A', unit: 'kg' },
      { n: 37, h: 68, fuel: 'Others (Please Refer to Table 1 and Specify in Data Source)', unit: 'kg' },
      { n: 38, h: 60, fuel: '', unit: '' },
    ],
  },
];

const TOTAL_EMISSIONS = (
  <>
    Total emissions (KgCO2-
    <br />
    e)
  </>
);
const DATA_SOURCE = (
  <>
    Data Source
    <br />
    (e. bills, invoice, meter reading, claim report)
  </>
);

const PINK = '#ffccff';
const YELLOW = '#ffffcc';
const GREEN = '#c6e0b4';

// rows 2 to 12 of the form above the table
const infoRows: { n: number; left?: string; leftBox?: { bg: string; text?: string; span?: number }; hideLeft?: boolean; right?: string; rightBox?: { bg: string; text?: string } }[] = [
  { n: 2 },
  { n: 3, left: 'Company:', leftBox: { bg: PINK, text: 'ABC Ltd' }, right: 'Reporting Period:', rightBox: { bg: GREEN, text: 'Jan' } },
  { n: 4 },
  { n: 5, left: 'Location:', leftBox: { bg: YELLOW }, right: 'Reporting Year:', rightBox: { bg: PINK, text: 'FYE2023' } },
  { n: 6 },
  { n: 7, left: 'Address:', leftBox: { bg: YELLOW, span: 5 }, right: 'PIC Name and Designation:', rightBox: { bg: YELLOW } },
  { n: 8, hideLeft: true },
  { n: 9, hideLeft: true, right: 'PIC Email:', rightBox: { bg: YELLOW } },
  { n: 10, hideLeft: true },
  { n: 11, hideLeft: true, right: 'PIC Contact No. :', rightBox: { bg: YELLOW } },
  { n: 12 },
];

const InfoRow = ({ row }: { row: (typeof infoRows)[number] }) => (
  <Row $h={row.n === 2 ? 19 : 20}>
    <RowHead>{row.n}</RowHead>
    <Blank />
    {row.left ? <FieldLabel>{row.left}</FieldLabel> : <Blank />}
    {!row.hideLeft &&
      (row.leftBox ? (
        <FieldBox colSpan={2} rowSpan={row.leftBox.span ?? 1} $bg={row.leftBox.bg}>
          {row.leftBox.text}
        </FieldBox>
      ) : (
        <Blank colSpan={2} />
      ))}
    <Blank />
    {row.right ? <FieldLabel>{row.right}</FieldLabel> : <Blank />}
    <Blank />
    {row.rightBox ? (
      <FieldBox colSpan={2} $bg={row.rightBox.bg}>
        {row.rightBox.text}
      </FieldBox>
    ) : (
      <Blank colSpan={2} />
    )}
    <Blank colSpan={5} />
  </Row>
);

const SectionRows = ({ section }: { section: Section }) => {
  const total = section.head.length + section.rows.length;
  const headSpan = section.head.length;
  return (
    <>
      {section.head.map(([n, h], i) => (
        <Row key={n} $h={h}>
          <RowHead>{n}</RowHead>
          <Blank />
          {i === 0 && (
            <>
              <Cell $kind="title" rowSpan={total}>
                {section.title}
              </Cell>
              <Cell $kind="headLeft" rowSpan={headSpan}>
                Source Description
              </Cell>
              <Cell $kind="headLeft" rowSpan={headSpan}>
                {section.fuelHead}
              </Cell>
              <Cell $kind="headCenter" rowSpan={headSpan}>
                {section.totalHead}
              </Cell>
              <Cell $kind="headCenter" rowSpan={headSpan}>
                Units
              </Cell>
              <Cell $kind={section.leftHead ? 'headLeft' : 'headCenter'} rowSpan={headSpan}>
                {section.efHead}
              </Cell>
              <Cell $kind={section.leftHead ? 'headLeft' : 'headCenter'} rowSpan={headSpan}>
                {TOTAL_EMISSIONS}
              </Cell>
              <Cell $kind="headCenter" $edge rowSpan={headSpan}>
                {DATA_SOURCE}
              </Cell>
            </>
          )}
          <Blank colSpan={5} />
        </Row>
      ))}
      {section.rows.map((r, i) => (
        <Row key={r.n} $h={r.h}>
          <RowHead>{r.n < 38 ? r.n : ''}</RowHead>
          <Blank />
          {i === 0 && (
            <Cell $kind="plain" rowSpan={section.rows.length}>
              {section.source}
            </Cell>
          )}
          <Cell $kind="plain">{r.fuel}</Cell>
          <Cell $kind="fill">{r.n < 38 ? '0.00' : ''}</Cell>
          <Cell $kind="center">{r.unit}</Cell>
          <Cell $kind={r.ef ? 'number' : 'input'}>{r.ef}</Cell>
          <Cell $kind="number">{r.n < 38 ? '0' : ''}</Cell>
          <Cell $kind="input" $edge />
          <Blank colSpan={5} />
        </Row>
      ))}
    </>
  );
};

const Sheet = () => (
  <SheetTable>
    <colgroup>
      {colWidths.map((w, i) => (
        <Col key={i} $w={w} />
      ))}
    </colgroup>
    <thead>
      <Row $h={36}>
        <Corner>
          <svg width="22" height="27" viewBox="0 0 22 27">
            <polygon points="22,0 22,27 0,27" fill="#e2e2e2" />
          </svg>
        </Corner>
        {colNames.map((c) => (
          <ColHead key={c} $selected={c === 'C'}>
            {c}
          </ColHead>
        ))}
      </Row>
    </thead>
    <tbody>
      <Row $h={21}>
        <RowHead>1</RowHead>
        <Banner colSpan={10}>CARBON DATA COLLECTION TEMPLATE</Banner>
        <Blank colSpan={4} />
      </Row>
      {infoRows.map((row) => (
        <InfoRow key={row.n} row={row} />
      ))}
      <Row $h={48}>
        <RowHead>13</RowHead>
        <Blank />
        <SectionTitle colSpan={8}>A. Process (Scope 1)</SectionTitle>
        <Blank colSpan={5} />
      </Row>
      {sections.map((s, i) => (
        <SectionRows key={i} section={s} />
      ))}
    </tbody>
  </SheetTable>
);

const App: React.FC = () => (
  <Window>
    <Global />
    <TitleBar>
      <AutoSave>AutoSave</AutoSave>
      <Toggle>
        <Knob />
        <ToggleText>OFF</ToggleText>
      </Toggle>
      <QuickIcon>
        <HomeIcon />
      </QuickIcon>
      <QuickIcon $ml={25}>
        <SaveIcon />
      </QuickIcon>
      <QuickIcon $ml={26}>
        <SaveEditIcon />
      </QuickIcon>
      <QuickIcon $ml={23}>
        <UndoIcon />
      </QuickIcon>
      <QuickIcon $ml={19}>
        <Chev c="#fff" />
      </QuickIcon>
      <QuickIcon $ml={19}>
        <RedoIcon />
      </QuickIcon>
      <QuickIcon $ml={25}>
        <DotsIcon />
      </QuickIcon>
      <TitleCenter>
        <XlsxIcon />
        <TitleText>Sustainability Toolkit — Saved to my Mac</TitleText>
        <Chev c="#fff" w={14} />
      </TitleCenter>
      <TitleRight>
        <SearchIcon />
        <PeopleIcon />
      </TitleRight>
    </TitleBar>

    <Shell>
      <MenuRow>
        <MenuTab $ml={0} $active>
          Home
        </MenuTab>
        <MenuTab $ml={47}>Insert</MenuTab>
        <MenuTab $ml={51}>Draw</MenuTab>
        <MenuTab $ml={46}>Page Layout</MenuTab>
        <MenuTab $ml={49}>Formulas</MenuTab>
        <MenuTab $ml={51}>Data</MenuTab>
        <MenuTab $ml={48}>Review</MenuTab>
        <MenuTab $ml={46}>View</MenuTab>
        <TellMe>
          <BulbIcon />
          Tell me
        </TellMe>
        <MenuButtons>
          <PillButton $w={191}>
            <CommentIcon />
            Comments
          </PillButton>
          <PillButton $w={133}>
            <ShareIcon />
            Share
          </PillButton>
        </MenuButtons>
      </MenuRow>

      <Ribbon>
        <FlexGroup $w={209} $pl={34}>
          <BigBtn $w={76}>
            <BigIconRow $gap={11}>
              <Tool $mt={4}>
                <PasteIcon />
              </Tool>
              <Chev />
            </BigIconRow>
            <PasteLabel>Paste</PasteLabel>
          </BigBtn>
          <ToolColumn $w={80}>
            <ColumnItem>
              <Tool $ml={21}>
                <ScissorsIcon />
              </Tool>
            </ColumnItem>
            <ColumnItem>
              <Tool $ml={16}>
                <CopyIcon />
              </Tool>
              <Chev />
            </ColumnItem>
            <ColumnItem>
              <Tool $ml={16}>
                <BrushIcon />
              </Tool>
            </ColumnItem>
          </ToolColumn>
        </FlexGroup>

        <Group $w={540} $pl={22}>
          <Rows>
            <ToolRow $h={48}>
              <Select $w={280}>
                Verdana (Body)
                <Chev />
              </Select>
              <Select $w={107} $ml={5}>
                9
                <Chev />
              </Select>
              <Tool $ml={15}>
                <AIcon up />
              </Tool>
              <Tool $ml={24}>
                <AIcon up={false} />
              </Tool>
            </ToolRow>
            <ToolRow>
              <FormatLetter $ml={16} $kind="b">B</FormatLetter>
              <FormatLetter $ml={36} $kind="i">I</FormatLetter>
              <FormatLetter $ml={36} $kind="u">U</FormatLetter>
              <Tool $ml={20}>
                <Chev />
              </Tool>
              <ThinSep $ml={23} />
              <Tool $ml={23}>
                <BorderIcon />
              </Tool>
              <Tool $ml={16}>
                <Chev />
              </Tool>
              <ThinSep $ml={21} />
              <Tool $ml={24}>
                <FillIcon />
              </Tool>
              <Tool $ml={16}>
                <Chev />
              </Tool>
              <Tool $ml={18}>
                <FontColorIcon />
              </Tool>
              <Tool $ml={14}>
                <Chev />
              </Tool>
            </ToolRow>
          </Rows>
        </Group>

        <Group $w={324} $pl={19}>
          <Rows>
            <ToolRow $h={48}>
              <AlignCell $pos="top">
                <Lines h={19} rows={[[0, 28], [6, 16], [0, 28]]} />
              </AlignCell>
              <AlignCell $on>
                <Lines h={19} rows={[[0, 28], [6, 16], [0, 28]]} />
              </AlignCell>
              <AlignCell $pos="bottom">
                <Lines h={19} rows={[[0, 28], [6, 16], [0, 28]]} />
              </AlignCell>
              <ThinSep $ml={15} />
              <Tool $ml={23}>
                <OrientIcon />
              </Tool>
              <Tool $ml={14}>
                <Chev />
              </Tool>
            </ToolRow>
            <ToolRow>
              <AlignCell>
                <Lines h={27} rows={[[0, 28], [0, 18], [0, 28], [0, 18]]} />
              </AlignCell>
              <AlignCell>
                <Lines h={27} rows={[[0, 28], [5, 18], [0, 28], [5, 18]]} />
              </AlignCell>
              <AlignCell>
                <Lines h={27} rows={[[0, 28], [10, 18], [0, 28], [10, 18]]} />
              </AlignCell>
              <ThinSep $ml={15} />
              <Tool $ml={25}>
                <IndentIcon out />
              </Tool>
              <Tool $ml={23}>
                <IndentIcon out={false} />
              </Tool>
            </ToolRow>
          </Rows>
        </Group>

        <Group $w={278} $pl={26}>
          <Rows>
            <ToolRow $h={48}>
              <Tool $ml={3}>
                <WrapIcon />
              </Tool>
              <WrapLabel>Wrap Text</WrapLabel>
              <Tool $ml={12}>
                <Chev />
              </Tool>
            </ToolRow>
            <ToolRow>
              <MergeIcon />
              <Tool $ml={3} />
              <WrapLabel>Merge &amp; Center</WrapLabel>
              <Tool $ml={11}>
                <Chev />
              </Tool>
            </ToolRow>
          </Rows>
        </Group>

        <Group $w={352} $pl={21}>
          <Rows>
            <ToolRow $h={48}>
              <Select $w={308}>
                General
                <Chev />
              </Select>
            </ToolRow>
            <ToolRow>
              <Tool $ml={7}>
                <AccountIcon />
              </Tool>
              <Tool $ml={12}>
                <Chev />
              </Tool>
              <BigSymbol $ml={19} $size={35}>%</BigSymbol>
              <Tool $ml={26}>
                <CommaIcon />
              </Tool>
              <ThinSep $ml={31} />
              <Tool $ml={24}>
                <DecimalIcon more />
              </Tool>
              <Tool $ml={20}>
                <DecimalIcon more={false} />
              </Tool>
            </ToolRow>
          </Rows>
        </Group>

        <FlexGroup $w={364} $pl={21}>
          <BigBtn $w={120}>
            <BigIconRow>
              <CondFormatIcon />
              <Chev />
            </BigIconRow>
            <BigLabel>{'Conditional\nFormatting'}</BigLabel>
          </BigBtn>
          <BigBtn $w={110}>
            <BigIconRow $gap={10}>
              <Tool $mt={12}>
                <FormatTableIcon />
              </Tool>
              <Chev />
            </BigIconRow>
            <BigLabel>{'Format\nas Table'}</BigLabel>
          </BigBtn>
          <BigBtn $w={90}>
            <BigIconRow $gap={10}>
              <Tool $mt={12}>
                <CellStylesIcon />
              </Tool>
              <Chev />
            </BigIconRow>
            <BigLabel>{'Cell\nStyles'}</BigLabel>
          </BigBtn>
        </FlexGroup>

        <FlexGroup $w={338} $pl={17}>
          <BigBtn $w={102}>
            <BigIconRow $gap={10}>
              <InsertIcon />
              <Chev />
            </BigIconRow>
            <BigLabel>Insert</BigLabel>
          </BigBtn>
          <BigBtn $w={102}>
            <BigIconRow $gap={10}>
              <DeleteIcon />
              <Chev />
            </BigIconRow>
            <BigLabel>Delete</BigLabel>
          </BigBtn>
          <BigBtn $w={98}>
            <BigIconRow>
              <Tool $mb={10}>
                <FormatCellsIcon />
              </Tool>
              <Chev />
            </BigIconRow>
            <BigLabel>Format</BigLabel>
          </BigBtn>
        </FlexGroup>

        <FlexGroup $w={310} $pl={28}>
          <ToolColumn $w={62}>
            <ColumnItem>
              <Tool $ml={3}>
                <SigmaIcon />
              </Tool>
              <Tool $ml={4}>
                <Chev />
              </Tool>
            </ColumnItem>
            <ColumnItem>
              <FillDownIcon />
              <Chev />
            </ColumnItem>
            <ColumnItem>
              <EraserIcon />
              <Chev />
            </ColumnItem>
          </ToolColumn>
          <BigBtn $w={102}>
            <BigIconRow>
              <SortIcon />
              <Chev />
            </BigIconRow>
            <BigLabel>{'Sort &\nFilter'}</BigLabel>
          </BigBtn>
          <BigBtn $w={98}>
            <BigIconRow>
              <FindIcon />
              <Chev />
            </BigIconRow>
            <BigLabel>{'Find &\nSelect'}</BigLabel>
          </BigBtn>
        </FlexGroup>

        <FlexGroup $w={165} $pl={15} $last>
          <BigBtn $w={100}>
            <BigIconRow>
              <AnalyzeIcon />
            </BigIconRow>
            <BigLabel>{'Analyze\nData'}</BigLabel>
          </BigBtn>
        </FlexGroup>
      </Ribbon>
    </Shell>

    <FormulaBar>
      <NameBox>
        C82
        <Spinner>
          <Tri dir="up" c="#777" />
          <Tri dir="down" c="#777" />
        </Spinner>
      </NameBox>
      <CrossCheck />
      <FxText>fx</FxText>
      <FormulaSep />
      <FormulaDrop>
        <Tri dir="down" c="#777" />
      </FormulaDrop>
    </FormulaBar>
    <FormulaGap />

    <Viewport>
      <Sheet />
      <FreezeV />
      <FreezeH />
      <GhostBar />
    </Viewport>

    <TabBar>
      <TabNav>
        <Tri dir="left" c="#bdbdbd" w={15} h={24} />
        <Tri dir="right" c="#4a4a4a" w={15} h={24} />
      </TabNav>
      <Tab $ml={8} $w={266} $bg="#000" $fg="#fff">Explanatory Notes</Tab>
      <TabDivider />
      <Tab $ml={6} $w={254} $bg="#000" $fg="#fff">1. Activation Plan</Tab>
      <TabDivider />
      <Tab $ml={6} $w={406} $bg="#7f7f7f" $fg="#111">2.1 WasteDataCollectionTemp</Tab>
      <TabDivider />
      <Tab $ml={6} $w={450} $bg="#548235" $fg="#fff">2.2 RecyclingDataCollectionTemp</Tab>
      <TabDivider />
      <Tab $ml={6} $w={402} $bg="#0070c0" $fg="#fff">2.3 WaterDataCollectionTemp</Tab>
      <ActiveTab>
        <ActiveFace>2.4 CarbonDataCollectionTemp</ActiveFace>
      </ActiveTab>
      <FadeTab $ml={8} $w={318} $bg="#ffc000" $fg="#111">Table 1 - Carbon Ref on Fuel</FadeTab>
      <AddSheet>
        <svg width="22" height="22" viewBox="0 0 22 22">
          <path d="M11 0 V22 M0 11 H22" stroke="#555" strokeWidth="3.4" />
        </svg>
      </AddSheet>
    </TabBar>

    <StatusBar>
      Ready
      <Access>
        <AccessIcon />
        Accessibility: Investigate
      </Access>
      <ViewGroup>
        <ViewBtn $on $w={74}>
          <NormalViewIcon />
        </ViewBtn>
        <ViewBtn $w={72}>
          <PageViewIcon />
        </ViewBtn>
        <ViewBtn $w={70}>
          <BreakViewIcon />
        </ViewBtn>
        <Tool $ml={16}>
          <svg width="16" height="4">
            <rect width="16" height="4" fill="#666" />
          </svg>
        </Tool>
        <Track>
          <TrackKnob />
        </Track>
        <svg width="16" height="18" viewBox="0 0 16 18">
          <path d="M8 0 V18 M0 9 H16" stroke="#666" strokeWidth="3.4" />
        </svg>
        <ZoomText>80%</ZoomText>
      </ViewGroup>
    </StatusBar>

    <Preview>
      <PreviewArt />
    </Preview>
  </Window>
);

export default App;
